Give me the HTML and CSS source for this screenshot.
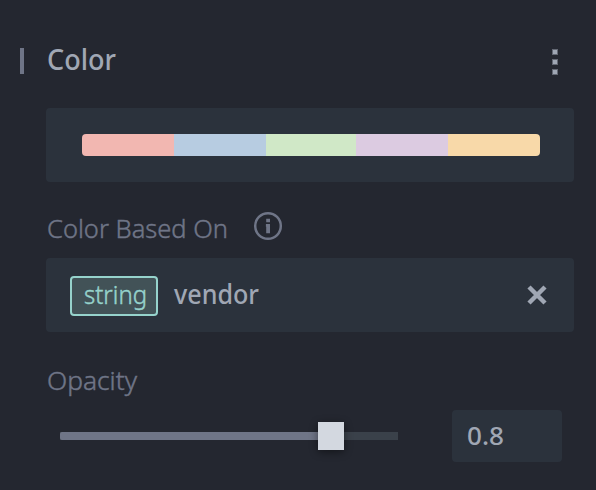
FILE: index.html
```
<!DOCTYPE html>
<html lang="en"><head><meta charset="utf-8"><title>Color</title><link rel="stylesheet" href="styles.css"></head>
<body>
<main class="panel">
<header class="header"><span class="marker"></span><h1 class="title"><svg class="fit" width="69" height="40"><text x="0" y="30" textLength="69" lengthAdjust="spacingAndGlyphs">Color</text></svg></h1><span class="menu"><i></i><i></i><i></i></span></header>
<section class="box palette"><div class="bar"><i class="red"></i><i class="blue"></i><i class="green"></i><i class="purple"></i><i class="orange"></i></div></section>
<div class="label based"><svg class="fit light" width="182" height="40"><text x="0" y="30" textLength="181" lengthAdjust="spacingAndGlyphs">Color Based On</text></svg>
<svg class="info" width="30" height="30" viewBox="0 0 30 30"><circle cx="15" cy="15" r="12.8" fill="none" stroke="currentColor" stroke-width="2.5"/><path d="M13.2 7.8h3.8v3.4h-3.8zM12.9 13h4.1v9.2h-3.8v-6.4h-.3z" fill="currentColor"/></svg></div>
<section class="box field"><span class="tag"><svg class="fit light" width="63" height="36"><text x="1" y="26" textLength="63" lengthAdjust="spacingAndGlyphs">string</text></svg></span><span class="value"><svg class="fit" width="85" height="40"><text x="0" y="28" textLength="85" lengthAdjust="spacingAndGlyphs">vendor</text></svg></span><svg class="close" width="22" height="22" viewBox="0 0 22 22"><path d="M3 3L19 19M19 3L3 19"/></svg></section>
<div class="label opacity"><svg class="fit light" width="92" height="40"><text x="0" y="28" textLength="90" lengthAdjust="spacingAndGlyphs">Opacity</text></svg></div>
<div class="controls"><div class="track"><div class="filled"></div><div class="thumb"></div></div><div class="number"><svg class="fit" width="38" height="40"><text x="-1" y="27" textLength="37" lengthAdjust="spacingAndGlyphs">0.8</text></svg></div></div>
</main></body></html>
```
FILE: styles.css
```
*{box-sizing:border-box}
body{margin:0;background:#242730;color:#a0a7b4;font-family:"Noto Sans","Open Sans",sans-serif}
.panel{width:596px;height:490px;padding:40px 22px 0 20px}
.fit{display:block;overflow:visible;fill:currentColor}
.light{stroke:currentColor;stroke-width:.45px}
.header{display:flex;height:68px}
.marker{width:4px;height:26px;margin-top:8px;background:#6f7587}
.title{margin:0 0 0 23px;font-size:28px;font-weight:500}
.menu{margin:9px 16px 0 auto;display:flex;flex-direction:column;gap:4px}
.menu i{width:6px;height:6px;border:1px solid #636873;background:#a0a7b4}
.box{margin-left:26px;background:#2b323c;border-radius:4px;height:74px}
.palette{padding:26px 34px 0 36px}
.bar{display:grid;grid-template-columns:92fr 92fr 90fr 92fr 92fr;height:22px;border-radius:4px;overflow:hidden}
.red{background:#f2b7b1}.blue{background:#b7cce1}.green{background:#d0e8c7}.purple{background:#dccbe1}.orange{background:#f8d9a9}
.label{margin-left:27px;color:#6f7587;font-size:26px;font-weight:300}
.based{display:flex;height:76px;padding-top:26px}
.info{margin:3px 0 0 24px}
.field{display:flex;padding:18px 26px 0 24px}
.tag{width:88px;height:40px;border:2px solid #96d3cc;border-radius:4px;background:#425257;color:#96d3cc;font-size:25px;font-weight:300;padding-left:11px}
.value{margin-left:16px;font-size:27px;font-weight:500}
.close{margin:8px 0 0 auto;fill:none;stroke:#a0a7b4;stroke-width:4.5}
.opacity{height:78px;padding-top:30px}
.controls{display:flex;margin-left:40px}
.track{width:338px;height:8px;margin-top:22px;background:#3a414a;position:relative}
.filled{width:80%;height:8px;background:#6f7587;border-radius:2px}
.thumb{position:absolute;left:258px;top:-10px;width:26px;height:28px;background:#d3d8e0;box-shadow:0 2px 8px #0007}
.number{width:110px;height:52px;margin-left:54px;background:#2b323c;border-radius:4px;padding:8px 16px;font-size:25px;font-weight:500}
```
